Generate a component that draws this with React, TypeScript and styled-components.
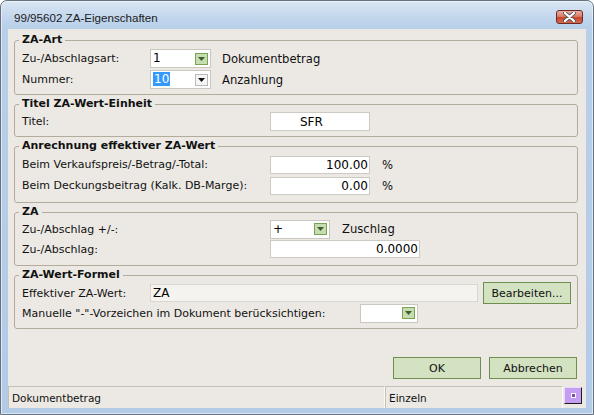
import React from "react";
import styled, { createGlobalStyle } from "styled-components";

const GlobalStyle = createGlobalStyle`
  html, body {
    margin: 0;
    padding: 0;
    background: #ffffff;
  }
  body {
    font-family: "DejaVu Sans", Verdana, sans-serif;
    font-size: 11px;
    color: #111;
  }
`;

const Window = styled.div`
  width: 594px;
  height: 415px;
  box-sizing: border-box;
  border: 1px solid #66727f;
  border-radius: 7px 7px 0 0;
  background: linear-gradient(180deg, #d9e6f3 0px, #c3d7ed 16px, #b7cfe9 28px, #b3cbe7 100%);
  box-shadow: inset 0 0 0 1px rgba(255, 255, 255, 0.55);
  padding: 0 7px 6px 7px;
  display: flex;
  flex-direction: column;
  overflow: hidden;
`;

const TitleBar = styled.div`
  height: 28px;
  box-sizing: border-box;
  padding: 4px 3px 0 6px;
  display: flex;
  align-items: center;
  justify-content: space-between;
`;

const Title = styled.span`
  font-family: "Liberation Sans", Arial, sans-serif;
  font-size: 11.6px;
  color: #1b1b1b;
`;

const CloseButton = styled.div`
  width: 27px;
  height: 14px;
  box-sizing: border-box;
  border: 1px solid #6d2a22;
  border-radius: 3px;
  background: linear-gradient(180deg, #eab0a2 0%, #d97d68 45%, #c4452e 55%, #d66a4f 100%);
  display: flex;
  align-items: center;
  justify-content: center;
`;

const Client = styled.div`
  flex: 1;
  background: #ece9e4;
  display: flex;
  flex-direction: column;
  padding: 4px 8px 0 6px;
  box-sizing: border-box;
`;

const Groups = styled.div`
  display: flex;
  flex-direction: column;
  gap: 2px;
`;

const Group = styled.fieldset<{ $pt: number; $pb: number }>`
  margin: 0;
  min-width: 0;
  border: 1px solid #b3ac9b;
  border-radius: 3px;
  padding: ${(p) => p.$pt}px 0 ${(p) => p.$pb}px 7px;
`;

const Legend = styled.legend`
  font-weight: bold;
  font-size: 11px;
  line-height: 14px;
  padding: 0 3px;
  margin-left: -3px;
  color: #111;
`;

const Row = styled.div<{ $label: number; $h: number }>`
  display: grid;
  grid-template-columns: ${(p) => p.$label}px auto auto 1fr;
  align-items: center;
  height: ${(p) => p.$h}px;
`;

const Label = styled.span`
  font-size: 11px;
  color: #111;
  white-space: nowrap;
`;

const SideText = styled.span<{ $gap: number }>`
  font-size: 11.6px;
  color: #111;
  margin-left: ${(p) => p.$gap}px;
  white-space: nowrap;
`;

const Combo = styled.div<{ $w: number }>`
  width: ${(p) => p.$w}px;
  height: 19px;
  box-sizing: border-box;
  border: 1px solid #cac7c0;
  background: #fff;
  display: flex;
  align-items: center;
  padding: 0 2px 0 2px;
`;

const ComboValue = styled.span`
  flex: 1;
  font-size: 12px;
  line-height: 15px;
  color: #000;
  white-space: nowrap;
`;

const Selected = styled.span`
  background: #3399ff;
  color: #fff;
  padding: 0 1px;
`;

const ComboArrow = styled.span<{ $focused?: boolean }>`
  width: 13px;
  height: 12px;
  box-sizing: border-box;
  border: 1px solid ${(p) => (p.$focused ? "#b9b9b9" : "#78a354")};
  background: ${(p) => (p.$focused ? "#f6f6f6" : "#c6dcb1")};
  display: flex;
  align-items: center;
  justify-content: center;
`;

const Field = styled.input<{ $w: number; $align?: string; $pl?: number; $ro?: boolean }>`
  width: ${(p) => p.$w}px;
  height: 18px;
  box-sizing: border-box;
  margin: 0;
  border: 1px solid ${(p) => (p.$ro ? "#d9d6cf" : "#cdcac3")};
  background: ${(p) => (p.$ro ? "#f4f3f0" : "#fff")};
  font-family: "DejaVu Sans", Verdana, sans-serif;
  font-size: 12px;
  color: #000;
  text-align: ${(p) => p.$align || "left"};
  padding: 0 ${(p) => (p.$align === "right" ? 1 : 2)}px 0 ${(p) => p.$pl ?? 2}px;
  outline: none;
`;

const Button = styled.button<{ $ml?: number }>`
  width: 88px;
  height: 22px;
  box-sizing: border-box;
  margin: 0 0 0 ${(p) => p.$ml ?? 0}px;
  border: 1px solid #6f8f4f;
  background: #d3e2c1;
  font-family: "DejaVu Sans", Verdana, sans-serif;
  font-size: 11px;
  color: #111;
  padding: 0;
`;

const Footer = styled.div`
  margin-top: auto;
  display: flex;
  justify-content: flex-end;
  gap: 8px;
  padding-right: 1px;
  margin-bottom: 7px;
`;

const StatusBar = styled.div`
  height: 22px;
  margin: 0 -8px 0 -6px;
  display: flex;
  align-items: stretch;
`;

const StatusPanel = styled.div<{ $w: number }>`
  width: ${(p) => p.$w}px;
  box-sizing: border-box;
  border-top: 1px solid #c4c0b6;
  border-left: 1px solid #c4c0b6;
  border-right: 1px solid #fbfaf8;
  padding-left: 3px;
  display: flex;
  align-items: center;
  font-size: 10.5px;
  color: #111;
`;

const Grip = styled.div`
  width: 18px;
  height: 17px;
  box-sizing: border-box;
  margin: 1px 0 0 1px;
  border-top: 1px solid #eadcff;
  border-left: 1px solid #eadcff;
  border-right: 1px solid #1c1c1c;
  border-bottom: 1px solid #1c1c1c;
  background: #c59df2;
  display: flex;
  align-items: center;
  justify-content: center;
  &::after {
    content: "";
    width: 3px;
    height: 3px;
    border: 1px solid #fff;
    background: #7a4fb0;
  }
`;

const Arrow = ({ focused }: { focused?: boolean }) => (
  <ComboArrow $focused={focused}>
    <svg width="7" height="4" viewBox="0 0 7 4">
      <polygon points="0,0 7,0 3.5,4" fill={focused ? "#111" : "#3f5e2c"} />
    </svg>
  </ComboArrow>
);

const ComboBox = ({
  w,
  value,
  selected,
  focused,
}: {
  w: number;
  value?: string;
  selected?: boolean;
  focused?: boolean;
}) => (
  <Combo $w={w}>
    <ComboValue>{selected ? <Selected>{value}</Selected> : value}</ComboValue>
    <Arrow focused={focused} />
  </Combo>
);

export default function App() {
  return (
    <>
      <GlobalStyle />
      <Window>
        <TitleBar>
          <Title>99/95602 ZA-Eigenschaften</Title>
          <CloseButton>
            <svg width="13" height="10" viewBox="0 0 13 10">
              <path
                d="M2 1 L11 9 M11 1 L2 9"
                stroke="#5a5a5a"
                strokeWidth="4"
                strokeLinecap="round"
              />
              <path
                d="M2 1 L11 9 M11 1 L2 9"
                stroke="#ffffff"
                strokeWidth="2.2"
                strokeLinecap="round"
              />
            </svg>
          </CloseButton>
        </TitleBar>
        <Client>
          <Groups>
            <Group $pt={1} $pb={4}>
              <Legend>ZA-Art</Legend>
              <Row $label={128} $h={21}>
                <Label>Zu-/Abschlagsart:</Label>
                <ComboBox w={61} value="1" />
                <SideText $gap={11}>Dokumentbetrag</SideText>
              </Row>
              <Row $label={128} $h={21}>
                <Label>Nummer:</Label>
                <ComboBox w={61} value="10" selected focused />
                <SideText $gap={11}>Anzahlung</SideText>
              </Row>
            </Group>

            <Group $pt={0} $pb={4}>
              <Legend>Titel ZA-Wert-Einheit</Legend>
              <Row $label={248} $h={21}>
                <Label>Titel:</Label>
                <Field $w={100} $pl={29} readOnly value="SFR" style={{ height: 19 }} />
              </Row>
            </Group>

            <Group $pt={1} $pb={6}>
              <Legend>Anrechnung effektiver ZA-Wert</Legend>
              <Row $label={248} $h={21}>
                <Label>Beim Verkaufspreis/-Betrag/-Total:</Label>
                <Field $w={100} $align="right" readOnly value="100.00" />
                <SideText $gap={12}>%</SideText>
              </Row>
              <Row $label={248} $h={21}>
                <Label>Beim Deckungsbeitrag (Kalk. DB-Marge):</Label>
                <Field $w={100} $align="right" readOnly value="0.00" />
                <SideText $gap={12}>%</SideText>
              </Row>
            </Group>

            <Group $pt={0} $pb={6}>
              <Legend>ZA</Legend>
              <Row $label={248} $h={20}>
                <Label>Zu-/Abschlag +/-:</Label>
                <ComboBox w={60} value="+" />
                <SideText $gap={12}>Zuschlag</SideText>
              </Row>
              <Row $label={248} $h={20}>
                <Label>Zu-/Abschlag:</Label>
                <Field $w={150} $align="right" readOnly value="0.0000" />
              </Row>
            </Group>

            <Group $pt={0} $pb={5}>
              <Legend>ZA-Wert-Formel</Legend>
              <Row $label={128} $h={21}>
                <Label>Effektiver ZA-Wert:</Label>
                <Field $w={328} $ro readOnly value="ZA" />
                <Button $ml={5}>Bearbeiten...</Button>
              </Row>
              <Row $label={338} $h={20}>
                <Label>Manuelle "-"-Vorzeichen im Dokument berücksichtigen:</Label>
                <ComboBox w={58} />
              </Row>
            </Group>
          </Groups>

          <Footer>
            <Button>OK</Button>
            <Button>Abbrechen</Button>
          </Footer>

          <StatusBar>
            <StatusPanel $w={377}>Dokumentbetrag</StatusPanel>
            <StatusPanel $w={178}>Einzeln</StatusPanel>
            <Grip />
          </StatusBar>
        </Client>
      </Window>
    </>
  );
}
